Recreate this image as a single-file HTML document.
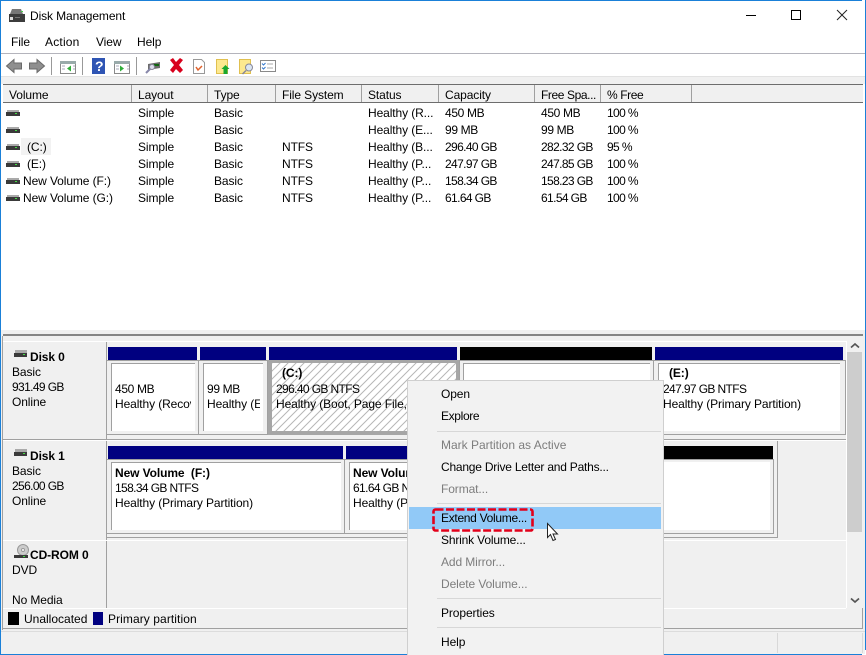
<!DOCTYPE html>
<html><head><meta charset="utf-8"><title>Disk Management</title>
<style>
html,body{margin:0;padding:0;background:#fff}
#w{position:relative;width:866px;height:655px;overflow:hidden;background:#fff;font:12px/16px "Liberation Sans",sans-serif;color:#000}
#w div,#w svg{position:absolute}
.t{white-space:nowrap;letter-spacing:-.1px}
.n{letter-spacing:-.62px}
.m{letter-spacing:-.35px}
.c{letter-spacing:-.22px}
.b{font-weight:bold}
.g{color:#7d7d7d}
.bar{background:#000080;height:13px}
.blk{background:#000;height:13px}
.o{background:#f0f0f0;border:1px solid #a0a0a0;box-sizing:border-box}
.i{background:#fff;border-top:1px solid #a0a0a0;border-left:1px solid #a0a0a0;box-sizing:border-box}
.sep{background:#d7d7d7;height:1px;left:437px;width:224px}
</style></head><body>
<div id="w">
<!-- window frame -->
<div style="left:0;top:0;width:862px;height:1px;background:#1a80d8"></div>
<div style="left:0;top:0;width:1px;height:655px;background:#1a80d8"></div>
<div style="left:865px;top:0;width:1px;height:650px;background:#1a80d8"></div>
<div style="left:0;top:654px;width:862px;height:1px;background:#1a80d8"></div>
<!-- title -->
<svg style="left:9px;top:9px" width="16" height="14" viewBox="0 0 16 14"><path d="M3 0h9l2 5H1z" fill="#777"/><rect x="0" y="5" width="16" height="8" fill="#3c3c3c"/><rect x="1" y="8" width="3" height="3" fill="#ddd"/><rect x="12" y="2" width="2" height="1" fill="#4c4"/><rect x="6" y="8" width="5" height="1" fill="#777"/></svg>
<div class="t" style="left:30px;top:8px">Disk Management</div>
<svg style="left:740px;top:8px" width="110" height="16" viewBox="0 0 110 16"><path d="M6 7.500h10" stroke="#000" fill="none"/><rect x="51.500" y="2.500" width="9" height="9" fill="none" stroke="#000"/><path d="M97 2l10 10M107 2l-10 10" stroke="#222" fill="none"/></svg>
<!-- menu -->
<div class="t" style="left:11px;top:34px">File</div>
<div class="t" style="left:45px;top:34px;letter-spacing:.2px">Action</div>
<div class="t" style="left:96px;top:34px">View</div>
<div class="t" style="left:137px;top:34px">Help</div>
<div style="left:1px;top:53px;width:864px;height:1px;background:#b4b4bc"></div>
<!-- toolbar -->
<svg style="left:5px;top:57px" width="280" height="18" viewBox="0 0 280 18">
<path d="M1.500 9l7.500-6.500v3.500h7.500v6H9v3.500z" fill="#8f8f8f" stroke="#6a6a6a"/>
<path d="M39.500 9L32 2.500V6h-7.500v6H32v3.500z" fill="#8f8f8f" stroke="#6a6a6a"/>
<path d="M46.500 0v18M77.500 0v18M131.500 0v18" stroke="#999" fill="none"/>
<g transform="translate(0,2)"><rect x="55.500" y="2.500" width="15" height="12" fill="#fff" stroke="#8a8a8a"/><rect x="55" y="2" width="16" height="3" fill="#9aa"/><path d="M66 6.500l-4 3 4 3z" fill="#2fae3a"/><path d="M57 7h3M57 10h3M68 7h2M68 10h2" stroke="#aab"/></g>
<rect x="87" y="1" width="13" height="16" fill="#2f55b4"/><text x="90" y="14" font-family="Liberation Sans" font-size="14" font-weight="bold" fill="#fff">?</text>
<g transform="translate(0,2)"><rect x="109.500" y="2.500" width="15" height="12" fill="#fff" stroke="#8a8a8a"/><rect x="109" y="2" width="16" height="3" fill="#9aa"/><path d="M115 6.500l4 3-4 3z" fill="#2fae3a"/><path d="M111 7h3M111 10h3M122 7h2M122 10h2" stroke="#aab"/></g>
<path d="M143 7l12-2v6l-12 2z" fill="#6c6c6c"/><rect x="149" y="7" width="5" height="2" fill="#161"/><path d="M141 16l5-5" stroke="#88a" stroke-width="2"/><circle cx="147" cy="10" r="2.500" fill="#dde" stroke="#889"/>
<path d="M165 3l3-2 3 4 4-4 3 2-4 5 4 5-3 3-4-4-3 4-3-3 4-5z" fill="#d8001c"/>
<path d="M188.500 2.500h8l3 3v11h-11z" fill="#fff" stroke="#999"/><path d="M191 10l2 3 4-4" stroke="#e0622c" stroke-width="1.500" fill="none"/>
<rect x="211.500" y="2.500" width="11" height="14" fill="#fde98f" stroke="#e0c050"/><path d="M220.500 8l4 4h-2v5h-4v-5h-2z" fill="#19a82e"/>
<rect x="234.500" y="2.500" width="11" height="14" fill="#fde98f" stroke="#e0c050"/><circle cx="244" cy="10.500" r="3.500" fill="#dbe6f2" stroke="#889"/><path d="M241 13.500l-3.500 3.500" stroke="#889" stroke-width="1.500"/>
<rect x="255.500" y="3.500" width="15" height="11" fill="#fff" stroke="#8a8a8a"/><path d="M257 6.500l1.500 1.500 2-2M257 10.500l1.500 1.500 2-2" stroke="#37c" fill="none"/><path d="M262 7h6M262 11h6" stroke="#aaa"/>
</svg>
<div style="left:1px;top:76px;width:864px;height:8px;background:#f0f0f0;border-top:1px solid #e2e2e2;box-sizing:border-box"></div>
<!-- list header -->
<div style="left:3px;top:84px;width:860px;height:1px;background:#6d6d6d"></div>
<div style="left:3px;top:85px;width:860px;height:17px;background:#f0f0f0"></div>
<div style="left:3px;top:102px;width:860px;height:1px;background:#6d6d6d"></div>
<div style="left:131px;top:85px;width:1px;height:17px;background:#a0a0a0"></div>
<div style="left:207px;top:85px;width:1px;height:17px;background:#a0a0a0"></div>
<div style="left:275px;top:85px;width:1px;height:17px;background:#a0a0a0"></div>
<div style="left:361px;top:85px;width:1px;height:17px;background:#a0a0a0"></div>
<div style="left:438px;top:85px;width:1px;height:17px;background:#a0a0a0"></div>
<div style="left:534px;top:85px;width:1px;height:17px;background:#a0a0a0"></div>
<div style="left:600px;top:85px;width:1px;height:17px;background:#a0a0a0"></div>
<div style="left:691px;top:85px;width:1px;height:17px;background:#a0a0a0"></div>
<div class="t" style="left:9px;top:87px">Volume</div>
<div class="t" style="left:138px;top:87px">Layout</div>
<div class="t" style="left:214px;top:87px">Type</div>
<div class="t" style="left:282px;top:87px">File System</div>
<div class="t" style="left:368px;top:87px">Status</div>
<div class="t" style="left:445px;top:87px">Capacity</div>
<div class="t c" style="left:541px;top:87px;letter-spacing:-.4px">Free Spa...</div>
<div class="t c" style="left:607px;top:87px;letter-spacing:-.4px">% Free</div>
<!-- list rows -->
<div style="left:21px;top:138px;width:30px;height:17px;background:#f2f2f2"></div>
<svg style="left:6px;top:107px" width="14" height="100" viewBox="0 0 14 100">
<g id="d"><rect x="1" y="3" width="12" height="2" fill="#aaa"/><rect x="0" y="5" width="14" height="4" fill="#3a3a3a"/><rect x="9" y="6" width="2" height="1" fill="#4d4"/></g>
<use href="#d" y="17"/><use href="#d" y="34"/><use href="#d" y="51"/><use href="#d" y="68"/><use href="#d" y="85"/>
</svg>
<div class="t" style="left:27px;top:139px">(C:)</div>
<div class="t" style="left:27px;top:156px">(E:)</div>
<div class="t" style="left:23px;top:173px">New Volume (F:)</div>
<div class="t" style="left:23px;top:190px">New Volume (G:)</div>
<div class="t" style="left:138px;top:105px">Simple</div><div class="t" style="left:214px;top:105px">Basic</div><div class="t" style="left:368px;top:105px">Healthy (R...</div><div class="t m" style="left:445px;top:105px">450 MB</div><div class="t m" style="left:541px;top:105px">450 MB</div><div class="t n" style="left:607px;top:105px">100 %</div>
<div class="t" style="left:138px;top:122px">Simple</div><div class="t" style="left:214px;top:122px">Basic</div><div class="t" style="left:368px;top:122px">Healthy (E...</div><div class="t m" style="left:445px;top:122px">99 MB</div><div class="t m" style="left:541px;top:122px">99 MB</div><div class="t n" style="left:607px;top:122px">100 %</div>
<div class="t" style="left:138px;top:139px">Simple</div><div class="t" style="left:214px;top:139px">Basic</div><div class="t" style="left:282px;top:139px">NTFS</div><div class="t" style="left:368px;top:139px">Healthy (B...</div><div class="t n" style="left:445px;top:139px">296.40 GB</div><div class="t n" style="left:541px;top:139px">282.32 GB</div><div class="t n" style="left:607px;top:139px">95 %</div>
<div class="t" style="left:138px;top:156px">Simple</div><div class="t" style="left:214px;top:156px">Basic</div><div class="t" style="left:282px;top:156px">NTFS</div><div class="t" style="left:368px;top:156px">Healthy (P...</div><div class="t n" style="left:445px;top:156px">247.97 GB</div><div class="t n" style="left:541px;top:156px">247.85 GB</div><div class="t n" style="left:607px;top:156px">100 %</div>
<div class="t" style="left:138px;top:173px">Simple</div><div class="t" style="left:214px;top:173px">Basic</div><div class="t" style="left:282px;top:173px">NTFS</div><div class="t" style="left:368px;top:173px">Healthy (P...</div><div class="t n" style="left:445px;top:173px">158.34 GB</div><div class="t n" style="left:541px;top:173px">158.23 GB</div><div class="t n" style="left:607px;top:173px">100 %</div>
<div class="t" style="left:138px;top:190px">Simple</div><div class="t" style="left:214px;top:190px">Basic</div><div class="t" style="left:282px;top:190px">NTFS</div><div class="t" style="left:368px;top:190px">Healthy (P...</div><div class="t n" style="left:445px;top:190px">61.64 GB</div><div class="t n" style="left:541px;top:190px">61.54 GB</div><div class="t n" style="left:607px;top:190px">100 %</div>
<!-- lower pane -->
<div style="left:1px;top:330px;width:864px;height:324px;background:#f0f0f0"></div>
<div style="left:3px;top:334px;width:860px;height:2px;background:#858585"></div>
<div style="left:2px;top:336px;width:1px;height:294px;background:#a0a0a0"></div>
<!-- disk labels -->
<div style="left:106px;top:342px;width:1px;height:266px;background:#a0a0a0"></div>
<div style="left:3px;top:439px;width:843px;height:1px;background:#a0a0a0"></div>
<div style="left:3px;top:440px;width:843px;height:1px;background:#fff"></div>
<div style="left:3px;top:540px;width:843px;height:1px;background:#fff"></div>
<div style="left:3px;top:608px;width:843px;height:1px;background:#fff"></div>
<div style="left:3px;top:341px;width:843px;height:1px;background:#fff"></div>
<svg style="left:14px;top:350px" width="14" height="10" viewBox="0 0 14 10"><rect x="1" y="0" width="12" height="3" fill="#aaa"/><rect x="0" y="3" width="13" height="4" fill="#3a3a3a"/><rect x="9" y="4" width="2" height="1" fill="#4d4"/></svg>
<div class="t b" style="left:30px;top:349px">Disk 0</div>
<div class="t" style="left:12px;top:364px">Basic</div>
<div class="t n" style="left:12px;top:379px">931.49 GB</div>
<div class="t" style="left:12px;top:394px">Online</div>
<svg style="left:14px;top:449px" width="14" height="10" viewBox="0 0 14 10"><rect x="1" y="0" width="12" height="3" fill="#aaa"/><rect x="0" y="3" width="13" height="4" fill="#3a3a3a"/><rect x="9" y="4" width="2" height="1" fill="#4d4"/></svg>
<div class="t b" style="left:30px;top:448px">Disk 1</div>
<div class="t" style="left:12px;top:463px">Basic</div>
<div class="t n" style="left:12px;top:478px">256.00 GB</div>
<div class="t" style="left:12px;top:493px">Online</div>
<svg style="left:14px;top:544px" width="16" height="16" viewBox="0 0 16 16"><circle cx="9" cy="6" r="5.500" fill="#ccc" stroke="#999"/><circle cx="9" cy="6" r="1.500" fill="#fff" stroke="#999"/><rect x="0" y="11" width="14" height="3" fill="#3a3a3a"/><rect x="9" y="12" width="2" height="1" fill="#4d4"/></svg>
<div class="t b" style="left:30px;top:547px">CD-ROM 0</div>
<div class="t" style="left:12px;top:562px">DVD</div>
<div class="t" style="left:12px;top:592px">No Media</div>
<!-- disk 0 -->
<div class="bar" style="left:108px;top:347px;width:89px"></div>
<div class="bar" style="left:200px;top:347px;width:66px"></div>
<div class="bar" style="left:269px;top:347px;width:188px"></div>
<div class="blk" style="left:460px;top:347px;width:192px"></div>
<div class="bar" style="left:655px;top:347px;width:188px"></div>
<div style="left:106px;top:360px;width:740px;height:1px;background:#a0a0a0"></div>
<div class="o" style="left:106px;top:360px;width:93px;height:75px"></div>
<div class="i" style="left:111px;top:363px;width:84px;height:68px"></div>
<div class="o" style="left:198px;top:360px;width:70px;height:75px"></div>
<div class="i" style="left:203px;top:363px;width:60px;height:68px"></div>
<div style="left:268px;top:360px;width:191px;height:75px;background:#a6a6a6"></div>
<svg style="left:272px;top:363px" width="184" height="68" viewBox="0 0 184 68"><defs><pattern id="ht" width="8" height="8" patternUnits="userSpaceOnUse"><path d="M-1 9L9-1M-1 1L1-1M7 9L9 7" stroke="#b6b6b6" fill="none"/></pattern></defs><rect width="184" height="68" fill="#fff"/><rect width="184" height="68" fill="url(#ht)"/></svg>
<div class="o" style="left:459px;top:360px;width:195px;height:75px"></div>
<div class="i" style="left:463px;top:363px;width:187px;height:68px"></div>
<div class="o" style="left:653px;top:360px;width:193px;height:75px"></div>
<div class="i" style="left:658px;top:363px;width:182px;height:68px"></div>
<div class="t m" style="left:115px;top:381px">450 MB</div>
<div class="t" style="left:115px;top:396px;width:76px;overflow:hidden">Healthy (Recovery</div>
<div class="t m" style="left:207px;top:381px">99 MB</div>
<div class="t" style="left:207px;top:396px;width:53px;overflow:hidden">Healthy (EFI</div>
<div class="t b" style="left:282px;top:365px">(C:)</div>
<div class="t n" style="left:276px;top:381px">296.40 GB NTFS</div>
<div class="t" style="left:276px;top:396px">Healthy (Boot, Page File,</div>
<div class="t b" style="left:669px;top:365px">(E:)</div>
<div class="t n" style="left:663px;top:381px">247.97 GB NTFS</div>
<div class="t" style="left:663px;top:396px">Healthy (Primary Partition)</div>
<!-- disk 1 -->
<div style="left:777px;top:441px;width:1px;height:97px;background:#a0a0a0"></div>
<div style="left:106px;top:537px;width:672px;height:1px;background:#a0a0a0"></div>
<div class="bar" style="left:108px;top:446px;width:235px"></div>
<div class="bar" style="left:346px;top:446px;width:100px"></div>
<div class="blk" style="left:600px;top:446px;width:173px"></div>
<div class="o" style="left:106px;top:459px;width:239px;height:75px"></div>
<div class="i" style="left:111px;top:462px;width:230px;height:68px"></div>
<div class="o" style="left:344px;top:459px;width:150px;height:75px"></div>
<div class="i" style="left:349px;top:462px;width:140px;height:68px"></div>
<div class="o" style="left:600px;top:459px;width:174px;height:75px"></div>
<div style="left:600px;top:462px;width:170px;height:68px;background:#fff"></div>
<div class="t b" style="left:115px;top:465px">New Volume&nbsp; (F:)</div>
<div class="t n" style="left:115px;top:480px">158.34 GB NTFS</div>
<div class="t" style="left:115px;top:495px">Healthy (Primary Partition)</div>
<div class="t b" style="left:353px;top:465px">New Volume</div>
<div class="t n" style="left:353px;top:480px">61.64 GB NTFS</div>
<div class="t" style="left:353px;top:495px">Healthy (Primary</div>
<!-- scrollbar -->
<div style="left:846px;top:341px;width:1px;height:267px;background:#fff"></div>
<div style="left:847px;top:352px;width:15px;height:180px;background:#cdcdcd"></div>
<svg style="left:850px;top:341px" width="10" height="10" viewBox="0 0 10 10"><path d="M1 6.500L5 3l4 3.500" stroke="#555" stroke-width="1.700" fill="none"/></svg>
<svg style="left:850px;top:595px" width="10" height="10" viewBox="0 0 10 10"><path d="M1 3.500L5 7l4-3.500" stroke="#555" stroke-width="1.700" fill="none"/></svg>
<!-- legend -->
<div style="left:8px;top:612px;width:11px;height:13px;background:#000"></div>
<div class="t" style="left:24px;top:611px;letter-spacing:0">Unallocated</div>
<div style="left:93px;top:612px;width:10px;height:13px;background:#000080"></div>
<div class="t" style="left:108px;top:611px;letter-spacing:.08px">Primary partition</div>
<div style="left:3px;top:628px;width:860px;height:1px;background:#a0a0a0"></div>
<div style="left:862px;top:608px;width:1px;height:21px;background:#a0a0a0"></div>
<div style="left:1px;top:631px;width:864px;height:1px;background:#dcdcdc"></div>
<div style="left:777px;top:633px;width:1px;height:20px;background:#d8d8d8"></div>
<div style="left:862px;top:633px;width:1px;height:20px;background:#d8d8d8"></div>
<!-- context menu -->
<div style="left:407px;top:380px;width:257px;height:276px;background:#f2f2f2;border:1px solid #cfcfcf;box-sizing:border-box"></div>
<div class="t" style="left:441px;top:386px">Open</div>
<div class="t c" style="left:441px;top:408px;letter-spacing:-.35px">Explore</div>
<div class="sep" style="top:431px"></div>
<div class="t g" style="left:441px;top:437px;letter-spacing:0">Mark Partition as Active</div>
<div class="t c" style="left:441px;top:459px">Change Drive Letter and Paths...</div>
<div class="t g" style="left:441px;top:481px">Format...</div>
<div class="sep" style="top:503px"></div>
<div style="left:409px;top:507px;width:252px;height:22px;background:#91c9f7"></div>
<div class="t c" style="left:441px;top:510px;letter-spacing:-.3px">Extend Volume...</div>
<svg style="left:432px;top:507px" width="103" height="26" viewBox="0 0 103 26"><rect x="1.500" y="2.500" width="99" height="21" rx="2" fill="none" stroke="#e2001a" stroke-width="2.600" stroke-dasharray="8 2.500"/></svg>
<div class="t c" style="left:441px;top:532px;letter-spacing:-.17px">Shrink Volume...</div>
<div class="t g" style="left:441px;top:554px">Add Mirror...</div>
<div class="t g" style="left:441px;top:576px">Delete Volume...</div>
<div class="sep" style="top:598px"></div>
<div class="t" style="left:441px;top:605px">Properties</div>
<div class="sep" style="top:627px"></div>
<div class="t" style="left:441px;top:634px">Help</div>
<svg style="left:546px;top:522px" width="14" height="21" viewBox="0 0 14 21"><path d="M1.500 1.500v14l3-3 2.500 6 2.500-1-2.500-5.500h4.500z" fill="#fff" stroke="#222"/></svg>
</div>
</body></html>
